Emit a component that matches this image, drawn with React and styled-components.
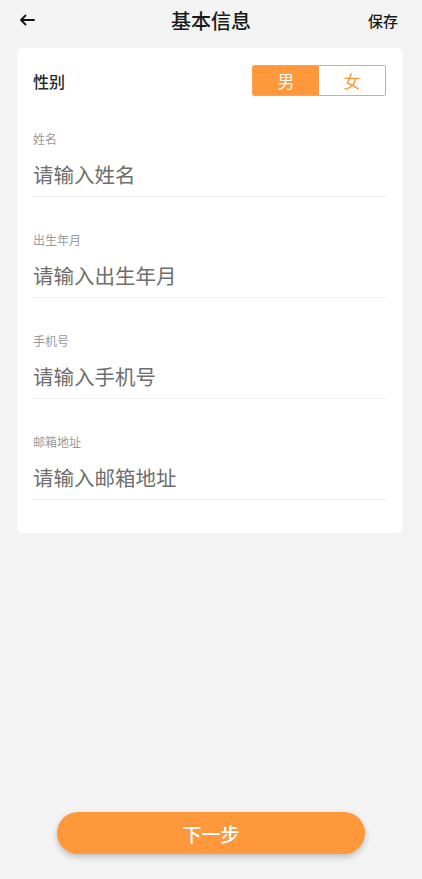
import React, { useState } from 'react'
import styled, { createGlobalStyle } from 'styled-components'

const GlobalStyle = createGlobalStyle`
  html, body {
    margin: 0;
    padding: 0;
    background: #f3f3f3;
    font-family: "Noto Sans CJK SC", "Noto Sans", sans-serif;
  }
  * { box-sizing: border-box; }
`

const orange = '#ff973b'

const fields = [
  { label: '姓名', placeholder: '请输入姓名' },
  { label: '出生年月', placeholder: '请输入出生年月' },
  { label: '手机号', placeholder: '请输入手机号' },
  { label: '邮箱地址', placeholder: '请输入邮箱地址' },
]

function App() {
  const [gender, setGender] = useState('male')
  return (
    <Page>
      <GlobalStyle />
      <Header>
        <BackButton>
          <svg width="16" height="12" viewBox="0 0 16 12" fill="none">
            <path d="M15 6H2M6.5 1.5 2 6l4.5 4.5" stroke="#111" strokeWidth="1.8" strokeLinecap="round" strokeLinejoin="round" />
          </svg>
        </BackButton>
        <Title>基本信息</Title>
        <SaveLink>保存</SaveLink>
      </Header>

      <Card>
        <GenderRow>
          <RowLabel>性别</RowLabel>
          <Toggle>
            <ToggleOption $active={gender === 'male'} onClick={() => setGender('male')}>男</ToggleOption>
            <ToggleOption $active={gender === 'female'} onClick={() => setGender('female')}>女</ToggleOption>
          </Toggle>
        </GenderRow>
        {fields.map((f) => (
          <Field key={f.label}>
            <FieldLabel>{f.label}</FieldLabel>
            <FieldInput placeholder={f.placeholder} />
          </Field>
        ))}
      </Card>

      <NextButton>下一步</NextButton>
    </Page>
  )
}

export default App

let Page = styled.div`
  min-height: 100vh;
  display: flex;
  flex-direction: column;
`
let Header = styled.div`
  height: 40px;
  display: flex;
  align-items: center;
  justify-content: space-between;
  padding: 0 24px 0 18px;
  position: relative;
`
let BackButton = styled.div`
  width: 18px;
  height: 18px;
  display: flex;
  align-items: center;
  justify-content: center;
`
let Title = styled.h1`
  position: absolute;
  left: 0;
  right: 0;
  text-align: center;
  margin: 0;
  font-size: 20px;
  font-weight: 500;
  color: #1a1a1a;
  pointer-events: none;
`
let SaveLink = styled.span`
  font-size: 15px;
  font-weight: 500;
  color: #1a1a1a;
`
let Card = styled.div`
  margin: 8px 19px 0 17px;
  background: #fff;
  border-radius: 6px;
  padding: 17px 17px 33px 16px;
`
let GenderRow = styled.div`
  display: flex;
  align-items: center;
  justify-content: space-between;
  height: 31px;
`
let RowLabel = styled.span`
  font-size: 16px;
  font-weight: 500;
  color: #2a2a2a;
`
let Toggle = styled.div`
  display: flex;
  width: 134px;
  height: 31px;
  border: 1px solid #ffa24f;
  border-radius: 2px;
  overflow: hidden;
`
let ToggleOption = styled.div`
  flex: 1;
  display: flex;
  align-items: center;
  justify-content: center;
  font-size: 17px;
  font-weight: 400;
  background: ${(p) => (p.$active ? orange : '#fff')};
  color: ${(p) => (p.$active ? '#fff' : orange)};
  cursor: pointer;
`
let Field = styled.div`
  display: flex;
  flex-direction: column;
  padding: 35px 0 8px;
  border-bottom: 1px solid #eeeeee;
`
let FieldLabel = styled.label`
  font-size: 12px;
  line-height: 16px;
  color: #9a9a9a;
`
let FieldInput = styled.input`
  margin-top: 13px;
  height: 28px;
  border: none;
  outline: none;
  padding: 0;
  font-family: inherit;
  font-size: 20.5px;
  color: #333;
  background: transparent;
  &::placeholder {
    color: #6e6e6e;
  }
`
let NextButton = styled.button`
  margin: auto auto 25px;
  width: 308px;
  height: 42px;
  border: none;
  border-radius: 21px;
  background: ${orange};
  color: #fff;
  font-family: inherit;
  font-size: 19px;
  font-weight: 500;
  box-shadow: 0 3px 6px rgba(0, 0, 0, 0.22);
`
